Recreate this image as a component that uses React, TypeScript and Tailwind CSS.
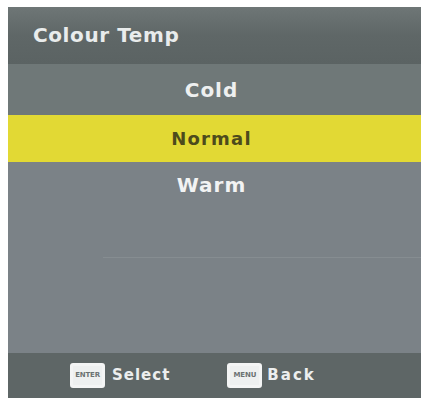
const font = { fontFamily: '"DejaVu Sans", Verdana, sans-serif' }

function KeyCap({ label }: { label: string }) {
  return (
    <div className="w-[35px] h-[25px] rounded-[3px] bg-[#eef0f0] border-[3px] border-[#f4f5f5] flex items-center justify-center">
      <span className="text-[7px] font-bold leading-none text-[#6b7272] tracking-tight">{label}</span>
    </div>
  )
}

export default function App() {
  return (
    <div className="w-[426px] h-[404px] bg-white pt-[7px] pl-[8px] pr-[5px] pb-[6px]" style={font}>
      <div className="h-full flex flex-col bg-[#7b8287]">
        {/* title band */}
        <div className="h-[57px] flex items-center pl-[25px] bg-gradient-to-b from-[#6e7676] via-[#5f6767] to-[#5b6363]">
          <span className="text-[20px] font-bold tracking-[0.6px] text-[#e9ecec] leading-none mb-[2px]">Colour Temp</span>
        </div>

        {/* options */}
        <div className="h-[51px] flex items-center justify-center pr-[6px] bg-[#6f7878]">
          <span className="text-[20px] font-bold tracking-[1px] text-[#eef0f0] leading-none">Cold</span>
        </div>
        <div className="h-[47px] flex items-center justify-center pr-[6px] bg-[#e2d934]">
          <span className="text-[18px] font-bold tracking-[1.2px] text-[#4d4b1c] leading-none">Normal</span>
        </div>
        <div className="h-[46px] flex items-center justify-center pr-[6px]">
          <span className="text-[20px] font-bold tracking-[1px] text-[#f2f3f3] leading-none">Warm</span>
        </div>

        <div className="flex-1 flex flex-col">
          <div className="h-[49px]" />
          <div className="h-px ml-[95px] bg-[#868d91]" />
        </div>

        {/* footer */}
        <div className="h-[45px] flex items-center pl-[62px] bg-[#5e6666]">
          <KeyCap label="ENTER" />
          <span className="ml-[7px] text-[15px] font-bold tracking-[1px] text-[#eceeee] leading-none">Select</span>
          <div className="ml-[57px]">
            <KeyCap label="MENU" />
          </div>
          <span className="ml-[5px] text-[15px] font-bold tracking-[2px] text-[#eceeee] leading-none">Back</span>
        </div>
      </div>
    </div>
  )
}
